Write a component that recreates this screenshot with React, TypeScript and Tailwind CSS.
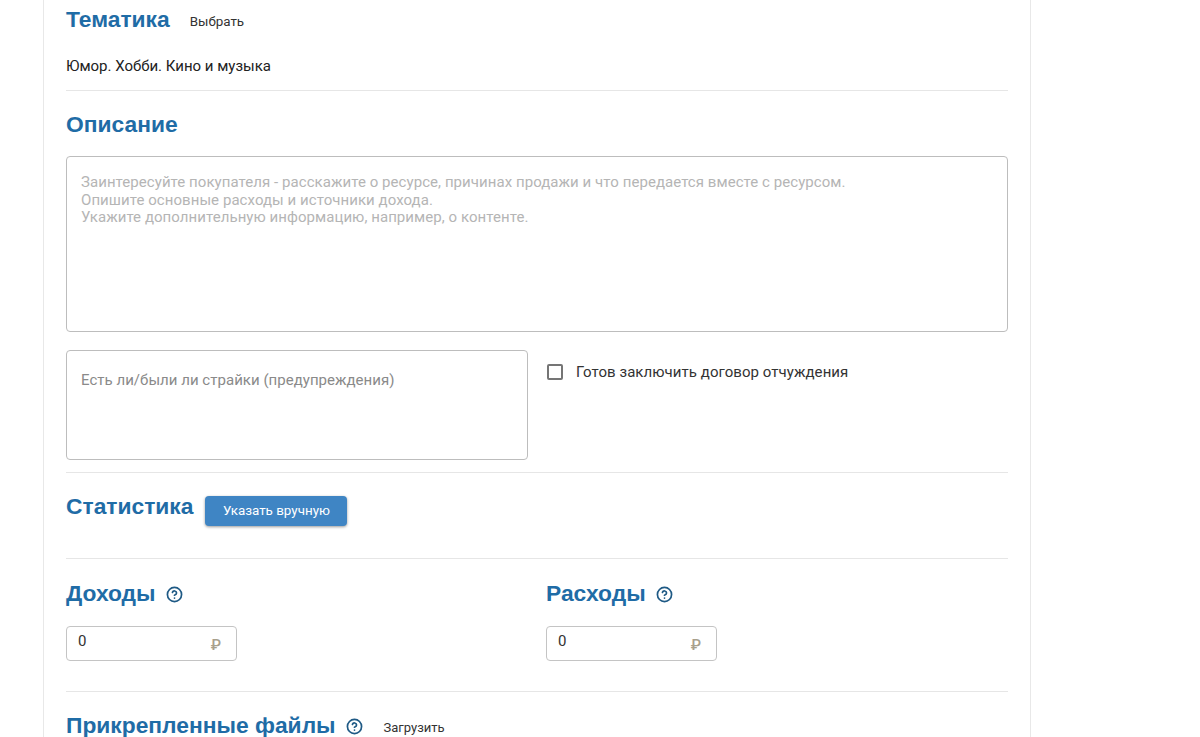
import { CircleHelp } from "lucide-react";

const headingClass = "font-['Liberation_Sans',Arial,sans-serif] text-[22.8px] leading-[28px] font-bold text-[#1f6ca6]";
const linkClass = "text-[13px] leading-[16px] text-[#333]";

function Hint() {
  return <CircleHelp className="mt-[2px] h-[17px] w-[17px] text-[#1f5a85]" strokeWidth={2.4} />;
}

function MoneyField({ title }: { title: string }) {
  return (
    <div>
      <div className="flex h-[28px] items-center gap-[10px]">
        <h2 className={headingClass}>{title}</h2>
        <Hint />
      </div>
      <div className="mt-[19px] flex h-[35px] w-[171px] items-start justify-between rounded-[4px] border border-[#c4c4c4] pl-[11px] pr-[15px]">
        <span className="mt-[5px] text-[15px] leading-[18px] text-[#333]">0</span>
        <span className="mt-[9px] text-[15px] leading-[18px] font-medium text-[#a8a08c]">₽</span>
      </div>
    </div>
  );
}

export default function App() {
  return (
    <div className="h-[737px] overflow-hidden bg-white font-['Roboto',sans-serif]">
      <div className="ml-[43px] h-full w-[988px] border-x border-[#e8e8e8] px-[22px] pt-[5px]">
        {/* Тематика */}
        <div className="flex h-[28px] items-center gap-[20px]">
          <h2 className={headingClass}>Тематика</h2>
          <span className="mt-[6px] text-[13.4px] leading-[16px] text-[#333]">Выбрать</span>
        </div>
        <p className="mt-[24px] text-[15px] leading-[18px] text-[#222]">Юмор. Хобби. Кино и музыка</p>
        <div className="mt-[15px] h-px bg-[#e6e6e6]" />

        {/* Описание */}
        <h2 className={`${headingClass} mt-[19px]`}>Описание</h2>
        <div className="mt-[18px] h-[176px] rounded-[4px] border border-[#bdbdbd] px-[14px] pt-[17px] text-[15px] leading-[17.5px] tracking-[0.06px] text-[#b5b5b5]">
          <p>Заинтересуйте покупателя - расскажите о ресурсе, причинах продажи и что передается вместе с ресурсом.</p>
          <p>Опишите основные расходы и источники дохода.</p>
          <p>Укажите дополнительную информацию, например, о контенте.</p>
        </div>

        <div className="mt-[18px] flex items-start gap-[19px]">
          <div className="h-[110px] w-[462px] rounded-[4px] border border-[#bdbdbd] px-[14px] pt-[20px] text-[15px] leading-[18px] tracking-[0.03px] text-[#8a8a8a]">
            Есть ли/были ли страйки (предупреждения)
          </div>
          <label className="mt-[13px] flex items-center gap-[13px]">
            <span className="h-[16px] w-[16px] rounded-[2px] border-2 border-[#757575]" />
            <span className="text-[15px] leading-[18px] tracking-[0.06px] text-[#333]">Готов заключить договор отчуждения</span>
          </label>
        </div>
        <div className="mt-[12px] h-px bg-[#e6e6e6]" />

        {/* Статистика */}
        <div className="mt-[19px] flex items-start gap-[12px]">
          <h2 className={headingClass}>Статистика</h2>
          <button className="mt-[4px] h-[30px] w-[142px] rounded-[4px] bg-[#3f85c4] text-[13.4px] text-white shadow-[0_1px_3px_rgba(0,0,0,0.4)]">
            Указать вручную
          </button>
        </div>
        <div className="mt-[32px] h-px bg-[#e6e6e6]" />

        {/* Доходы и расходы */}
        <div className="mt-[20px] grid grid-cols-[480px_1fr]">
          <MoneyField title="Доходы" />
          <MoneyField title="Расходы" />
        </div>
        <div className="mt-[30px] h-px bg-[#e6e6e6]" />

        {/* Файлы */}
        <div className="mt-[19px] flex h-[28px] items-center">
          <h2 className={headingClass}>Прикрепленные файлы</h2>
          <span className="ml-[10px] flex"><Hint /></span>
          <span className={`${linkClass} ml-[21px] mt-[6px]`}>Загрузить</span>
        </div>
      </div>
    </div>
  );
}
